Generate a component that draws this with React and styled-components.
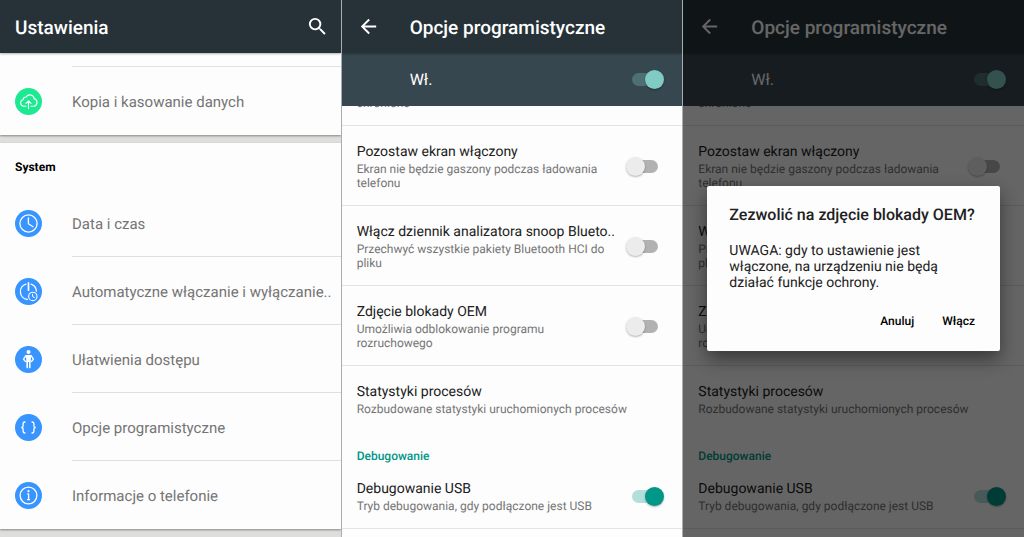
import React, { useId, useState } from "react";
import styled, { createGlobalStyle, css } from "styled-components";
import { MdArrowBack, MdSearch } from "react-icons/md";

const GlobalStyle = createGlobalStyle`
  *, *::before, *::after { box-sizing: border-box; }
  body {
    margin: 0;
    background: #fdfdfd;
    color: #212121;
    font-family: Roboto, "Noto Sans", sans-serif;
    text-rendering: geometricPrecision;
  }
  h1, h2, p { margin: 0; padding: 0; }
`;

const Screens = styled.main`
  display: grid;
  grid-template-columns: repeat(3, minmax(0, 1fr));
  gap: 1px;
  min-height: 100vh;
  background: #a9aeb1;
`;

const Screen = styled.section`
  position: relative;
  display: flex;
  flex-direction: column;
  overflow: hidden;
  background: ${(p) => (p.$tinted ? "#dededc" : "#fdfdfd")};
`;

const AppBar = styled.header`
  display: flex;
  align-items: center;
  gap: 30px;
  height: 53px;
  padding: 0 12px 0 15px;
  background: #263238;
  color: #fff;
  z-index: 1;
  box-shadow: 0 1px 2px rgba(0, 0, 0, 0.3);
`;

const AppTitle = styled.h1`
  flex: 1;
  padding-top: 2px;
  font-size: 19px;
  line-height: 24px;
  font-weight: 500;
  white-space: nowrap;
`;

const IconButton = styled.button`
  display: flex;
  padding: 0;
  border: 0;
  background: none;
  color: inherit;
  font-size: 23px;
  cursor: pointer;
`;

const Card = styled.section`
  background: #fdfdfd;
  box-shadow: 0 1px 2px rgba(0, 0, 0, 0.4);
  & + & { margin-top: 8px; }
`;

const CardTop = styled.div`
  height: 14px;
  margin-left: 72px;
  border-bottom: 1px solid #e2e2e2;
`;

const CardTitle = styled.h2`
  padding: 14px 15px 12px;
  color: #000;
  font-size: 12px;
  line-height: 20px;
  font-weight: 700;
`;

const MenuLink = styled.a`
  display: flex;
  align-items: center;
  height: 68px;
  padding-left: 15px;
  gap: 30px;
  color: #757575;
  font-size: 15px;
  line-height: 20px;
  text-decoration: none;
  white-space: nowrap;
`;

const MenuLabel = styled.span`
  flex: 1;
  display: flex;
  align-items: center;
  align-self: stretch;
  padding-top: 2px;
  border-bottom: 1px solid ${(p) => (p.$last ? "transparent" : "#e0e0e0")};
`;

const Glyph = styled.svg`
  width: 27px;
  height: 27px;
  flex: none;
  fill: none;
  stroke: #fff;
  stroke-width: 1.1;
  stroke-linecap: round;
  stroke-linejoin: round;
`;

const MasterRow = styled.label`
  display: flex;
  align-items: center;
  justify-content: space-between;
  height: 53px;
  padding: 0 18px 0 68px;
  background: #37474f;
  color: #fff;
  font-size: 16px;
  line-height: 20px;
`;

const ClippedRow = styled.div`
  display: flex;
  align-items: flex-end;
  height: 20px;
  padding: 0 15px 15px;
  overflow: hidden;
  border-bottom: 1px solid #e4e4e4;
`;

const SettingRow = styled.label`
  display: flex;
  align-items: center;
  justify-content: space-between;
  gap: 14px;
  padding: 16px 18px 15px 15px;
  ${(p) => p.$divided && css`border-bottom: 1px solid #e4e4e4;`}
`;

const SettingText = styled.span`
  flex: 1;
  display: flex;
  flex-direction: column;
  min-width: 0;
`;

const SettingTitle = styled.span`
  color: #212121;
  font-size: 14px;
  line-height: 20px;
  white-space: nowrap;
`;

const SettingNote = styled.span`
  color: #757575;
  font-size: 12px;
  line-height: 14px;
`;

const GroupTitle = styled.h2`
  padding: 18px 15px 0;
  color: #009688;
  font-size: 12px;
  line-height: 14px;
  font-weight: 500;
`;

const Toggle = styled.input.attrs({ type: "checkbox", role: "switch" })`
  appearance: none;
  display: grid;
  align-items: center;
  flex: none;
  width: 38px;
  height: 20px;
  margin: 0;
  cursor: pointer;

  &::before, &::after { content: ""; grid-area: 1 / 1; }
  &::before {
    justify-self: center;
    width: 26px;
    height: 13px;
    border-radius: 7px;
    background: #b2b2b2;
  }
  &::after {
    justify-self: start;
    width: 19px;
    height: 19px;
    border-radius: 50%;
    background: #ececec;
    box-shadow: 0 1px 2px rgba(0, 0, 0, 0.3);
  }
  &:checked::before { background: ${(p) => (p.$onDark ? "#4e7073" : "#b2dfdb")}; }
  &:checked::after {
    justify-self: end;
    background: ${(p) => (p.$onDark ? "#80cbc4" : "#009688")};
  }
`;

const Scrim = styled.div`
  position: absolute;
  inset: 0;
  z-index: 2;
  display: flex;
  align-items: center;
  padding: 0 24px;
  background: rgba(0, 0, 0, 0.6);
`;

const Dialog = styled.div`
  flex: 1;
  padding: 17px 15px 16px 22px;
  border-radius: 2px;
  background: #fdfdfd;
  box-shadow: 0 8px 18px rgba(0, 0, 0, 0.45);
`;

const DialogTitle = styled.h2`
  font-size: 16px;
  line-height: 24px;
  font-weight: 500;
  white-space: nowrap;
`;

const DialogText = styled.p`
  max-width: 224px;
  margin: 16px 0;
  font-size: 14px;
  line-height: 16px;
`;

const DialogActions = styled.div`
  display: flex;
  justify-content: flex-end;
  gap: 8px;
`;

const DialogButton = styled.button`
  padding: 0 10px;
  border: 0;
  background: none;
  color: #000;
  font-family: inherit;
  font-size: 12px;
  line-height: 28px;
  font-weight: 500;
  text-rendering: inherit;
  cursor: pointer;
`;

const BLUE = "#3894ff";

function Disc({ color, children }) {
  return (
    <Glyph viewBox="0 0 27 27" aria-hidden="true">
      <circle cx="13.5" cy="13.5" r="13.5" fill={color} stroke="none" />
      {children}
    </Glyph>
  );
}

const icons = {
  cloud: (
    <Disc color="#1de992">
      <path d="M11 18.2H8.8a3.3 3.3 0 0 1-.7-6.5 3 3 0 0 1 3-2.7 4.4 4.4 0 0 1 8.1 1.6 3.9 3.9 0 0 1-.5 7.6H16" />
      <path d="M13.5 20.6v-7.4M11 15.4l2.5-2.4 2.5 2.4" />
    </Disc>
  ),
  clock: (
    <Disc color={BLUE}>
      <circle cx="13.5" cy="13.5" r="8.6" strokeWidth="1.3" />
      <path d="M13.4 8v5.7l4.6 3" strokeWidth="1.3" />
    </Disc>
  ),
  power: (
    <Disc color={BLUE}>
      <path d="M11 6.1a7.9 7.9 0 0 0 1.3 15.4M16.1 6.1a7.9 7.9 0 0 1 5.3 7" strokeWidth="1.3" />
      <path d="M13.5 4.9v7.3" strokeWidth="1.7" />
      <circle cx="17.8" cy="18.4" r="4.2" />
      <path d="M17.6 16.2v2.3l1.9 1.1" strokeWidth="1" />
    </Disc>
  ),
  person: (
    <Disc color={BLUE}>
      <circle cx="13.5" cy="6" r="2" fill="#fff" stroke="none" />
      <path d="M10.8 9h5.4l-.6 7h-4.2z" fill="#fff" stroke="none" />
      <path d="M10.9 9.5 8.6 13.2l1.8 2.2M16.1 9.5l2.3 3.7-1.8 2.2" strokeWidth="1.4" />
      <path d="M12.2 15.4v6.2M14.8 15.4v6.2" strokeWidth="1.6" />
    </Disc>
  ),
  braces: (
    <Disc color={BLUE}>
      <path
        d="M10 8c-1.5 0-1.9.6-1.9 1.9v1.8c0 1-.4 1.6-1.3 1.8.9.2 1.3.8 1.3 1.8v1.8c0 1.3.4 1.9 1.9 1.9M17 8c1.5 0 1.9.6 1.9 1.9v1.8c0 1 .4 1.6 1.3 1.8-.9.2-1.3.8-1.3 1.8v1.8c0 1.3-.4 1.9-1.9 1.9"
        strokeWidth="1.3"
      />
    </Disc>
  ),
  info: (
    <Disc color={BLUE}>
      <circle cx="13.5" cy="13.5" r="8.4" strokeWidth="1.3" />
      <circle cx="13.5" cy="9.2" r="1.1" fill="#fff" stroke="none" />
      <path d="M12.3 12h1.3v5.6M12 17.7h3" strokeWidth="1.3" strokeLinecap="butt" />
    </Disc>
  ),
};

const systemItems = [
  { icon: "clock", label: "Data i czas" },
  { icon: "power", label: "Automatyczne włączanie i wyłączanie.." },
  { icon: "person", label: "Ułatwienia dostępu" },
  { icon: "braces", label: "Opcje programistyczne" },
  { icon: "info", label: "Informacje o telefonie" },
];

const developerItems = [
  { title: "Pozostaw ekran włączony", note: "Ekran nie będzie gaszony podczas ładowania telefonu" },
  { title: "Włącz dziennik analizatora snoop Blueto..", note: "Przechwyć wszystkie pakiety Bluetooth HCI do pliku" },
  { title: "Zdjęcie blokady OEM", note: "Umożliwia odblokowanie programu rozruchowego" },
];

function MenuItem({ icon, label, last }) {
  return (
    <MenuLink href="#">
      {icons[icon]}
      <MenuLabel $last={last}>{label}</MenuLabel>
    </MenuLink>
  );
}

function Setting({ title, note, on = false, divided }) {
  const id = useId();
  return (
    <SettingRow htmlFor={id} $divided={divided}>
      <SettingText>
        <SettingTitle>{title}</SettingTitle>
        <SettingNote>{note}</SettingNote>
      </SettingText>
      <Toggle id={id} defaultChecked={on} />
    </SettingRow>
  );
}

function SettingsScreen() {
  return (
    <Screen $tinted>
      <AppBar>
        <AppTitle>Ustawienia</AppTitle>
        <IconButton type="button" aria-label="Szukaj"><MdSearch /></IconButton>
      </AppBar>
      <Card>
        <CardTop />
        <MenuItem icon="cloud" label="Kopia i kasowanie danych" last />
      </Card>
      <Card>
        <CardTitle>System</CardTitle>
        {systemItems.map((item, i) => (
          <MenuItem key={item.label} {...item} last={i === systemItems.length - 1} />
        ))}
      </Card>
    </Screen>
  );
}

function DeveloperScreen({ children }) {
  const masterId = useId();
  return (
    <Screen>
      <AppBar>
        <IconButton type="button" aria-label="Wstecz"><MdArrowBack /></IconButton>
        <AppTitle>Opcje programistyczne</AppTitle>
      </AppBar>
      <MasterRow htmlFor={masterId}>
        Wł.
        <Toggle id={masterId} $onDark defaultChecked />
      </MasterRow>
      <ClippedRow>
        <SettingNote>chronione</SettingNote>
      </ClippedRow>
      {developerItems.map((item) => (
        <Setting key={item.title} {...item} divided />
      ))}
      <SettingRow as="div">
        <SettingText>
          <SettingTitle>Statystyki procesów</SettingTitle>
          <SettingNote>Rozbudowane statystyki uruchomionych procesów</SettingNote>
        </SettingText>
      </SettingRow>
      <GroupTitle>Debugowanie</GroupTitle>
      <Setting title="Debugowanie USB" note="Tryb debugowania, gdy podłączone jest USB" on divided />
      {children}
    </Screen>
  );
}

export default function App() {
  const [open, setOpen] = useState(true);
  const close = () => setOpen(false);
  return (
    <>
      <GlobalStyle />
      <Screens>
        <SettingsScreen />
        <DeveloperScreen />
        <DeveloperScreen>
          {open && (
            <Scrim>
              <Dialog role="dialog" aria-modal="true" aria-labelledby="oem-title">
                <DialogTitle id="oem-title">Zezwolić na zdjęcie blokady OEM?</DialogTitle>
                <DialogText>
                  UWAGA: gdy to ustawienie jest włączone, na urządzeniu nie będą działać funkcje ochrony.
                </DialogText>
                <DialogActions>
                  <DialogButton type="button" onClick={close}>Anuluj</DialogButton>
                  <DialogButton type="button" onClick={close}>Włącz</DialogButton>
                </DialogActions>
              </Dialog>
            </Scrim>
          )}
        </DeveloperScreen>
      </Screens>
    </>
  );
}
